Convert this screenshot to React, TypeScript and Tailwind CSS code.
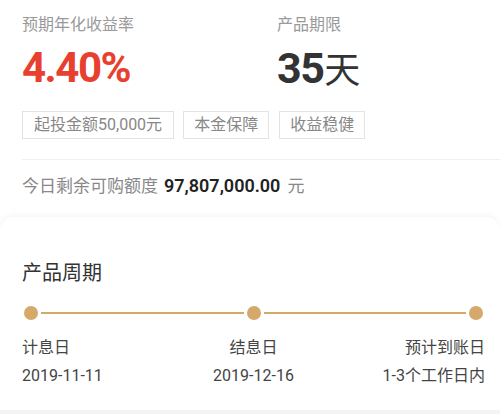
import React from "react";

const cjk = { fontFamily: 'Roboto, "Noto Sans CJK SC", sans-serif' };

function Dot() {
  return <div className="w-[14px] h-[14px] rounded-full bg-[#d4a96a] shrink-0" />;
}

export default function App() {
  return (
    <div className="w-[500px] h-[414px] bg-white overflow-hidden relative" style={cjk}>
      <div className="bg-white">
        <div className="grid grid-cols-[255px_1fr] pl-[22px] pt-[14px]">
          <div>
            <div className="text-[16px] leading-[22px] text-[#999]">预期年化收益率</div>
            <div className="mt-[8px] text-[42px] leading-[48px] font-bold text-[#e8402f] tracking-[-1.5px]">4.40%</div>
          </div>
          <div>
            <div className="text-[16px] leading-[22px] text-[#999]">产品期限</div>
            <div className="mt-[8px] leading-[48px] text-[#333] flex items-baseline">
              <span className="text-[43px] font-bold tracking-[-1.5px]">35</span>
              <span className="text-[36px] ml-[1px]">天</span>
            </div>
          </div>
        </div>
        <div className="flex gap-[9px] pl-[22px] mt-[16px]">
          <div className="h-[28px] px-[11px] border border-[#e3e3e3] text-[16px] leading-[26px] text-[#888]">起投金额50,000元</div>
          <div className="h-[28px] px-[10px] border border-[#e3e3e3] text-[16px] leading-[26px] text-[#888]">本金保障</div>
          <div className="h-[28px] px-[10px] border border-[#e3e3e3] text-[16px] leading-[26px] text-[#888] ml-[1px]">收益稳健</div>
        </div>
        <div className="ml-[22px] mt-[20px] border-t border-[#efefef]" />
        <div className="pl-[22px] pt-[15px] text-[17px] leading-[22px] text-[#888] flex items-baseline">
          <span>今日剩余可购额度</span>
          <span className="ml-[6px] text-[18px] font-semibold text-[#222]">97,807,000.00</span>
          <span className="ml-[7px]">元</span>
        </div>
      </div>
      <div className="mt-[14px] bg-gradient-to-b from-white to-[#f6f6f6] pt-[6px]">
        <div className="bg-white rounded-t-[14px] shadow-[0_-2px_6px_rgba(0,0,0,0.04)] pl-[22px] pr-[15px] pt-[43px] pb-[24px]">
          <div className="text-[20px] leading-[26px] text-[#333]">产品周期</div>
          <div className="mt-[20px] flex items-center px-[2px]">
            <Dot />
            <div className="flex-1 mx-[3px] h-[2px] bg-[#d4aa6b]" />
            <Dot />
            <div className="flex-1 mx-[3px] h-[2px] bg-[#d4aa6b]" />
            <Dot />
          </div>
          <div className="mt-[18px] grid grid-cols-3 text-[16px] leading-[20px] text-[#444]">
            <div className="flex flex-col items-start gap-[8px]">
              <span>计息日</span>
              <span>2019-11-11</span>
            </div>
            <div className="flex flex-col items-center gap-[8px]">
              <span>结息日</span>
              <span>2019-12-16</span>
            </div>
            <div className="flex flex-col items-end gap-[8px]">
              <span>预计到账日</span>
              <span>1-3个工作日内</span>
            </div>
          </div>
        </div>
        <div className="h-[20px] bg-[#f4f4f4]" />
      </div>
    </div>
  );
}
